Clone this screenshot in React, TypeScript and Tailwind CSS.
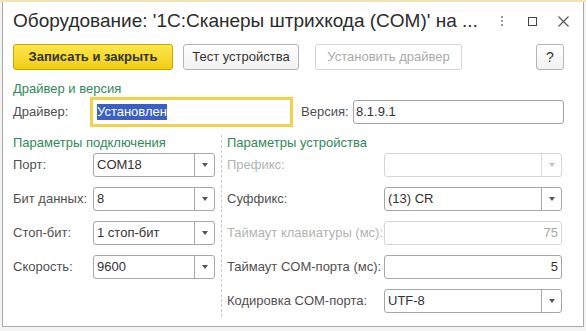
import type { ReactNode } from "react";

type RowProps = { label: string; disabled?: boolean; labelWidth: string; children: ReactNode };

function Row({ label, disabled, labelWidth, children }: RowProps) {
  return (
    <div className="flex h-[24px] items-center">
      <span className={`${labelWidth} shrink-0 ${disabled ? "text-[#b3b3b3]" : "text-[#505050]"}`}>{label}</span>
      {children}
    </div>
  );
}

function Arrow({ disabled }: { disabled?: boolean }) {
  return (
    <span
      className={`h-0 w-0 border-l-[3px] border-r-[3px] border-t-[4px] border-l-transparent border-r-transparent ${
        disabled ? "border-t-[#c4c4c4]" : "border-t-[#555]"
      }`}
    />
  );
}

function Select({ value, width, disabled }: { value?: string; width: string; disabled?: boolean }) {
  return (
    <div
      className={`${width} flex h-[24px] rounded-[3px] border bg-white ${
        disabled ? "border-[#d6d6d6]" : "border-[#a6a6a6]"
      }`}
    >
      <span className="flex flex-1 items-center pl-[3px] text-[#333]">{value}</span>
      <span
        className={`flex w-[20px] items-center justify-center border-l ${
          disabled ? "border-[#dcdcdc]" : "border-[#a6a6a6]"
        }`}
      >
        <Arrow disabled={disabled} />
      </span>
    </div>
  );
}

function NumField({ value, disabled }: { value: string; disabled?: boolean }) {
  return (
    <div
      className={`flex h-[24px] w-[178px] items-center justify-end rounded-[3px] border bg-white pr-[3px] ${
        disabled ? "border-[#d6d6d6] text-[#a8a8a8]" : "border-[#a6a6a6] text-[#333]"
      }`}
    >
      {value}
    </div>
  );
}

export default function App() {
  return (
    <div className="h-[331px] w-[586px] overflow-hidden bg-[#f3f3f3] font-[family-name:'Liberation_Sans',Arial,sans-serif] text-[13px] text-[#444]">
      <div className="h-[2px] bg-[#efe4b9]" />
      <div className="ml-[2px] h-[325px] w-[582px] border-b border-l border-r border-[#a9a9a9] bg-white pl-[10px] pr-[19px]">
        {/* title */}
        <div className="flex h-[38px] items-center">
          <span className="flex-1 text-[19px] text-[#2b2b2b]">
            Оборудование: '1С:Сканеры штрихкода (COM)' на ...
          </span>
          <div className="mr-[-5px] flex items-center">
            <span className="flex flex-col gap-[2px]">
              <span className="h-[2px] w-[2px] bg-[#999]" />
              <span className="h-[2px] w-[2px] bg-[#999]" />
              <span className="h-[2px] w-[2px] bg-[#999]" />
            </span>
            <span className="ml-[25px] h-[9px] w-[9px] border border-[#444]" />
            <svg className="ml-[21px]" width="11" height="11" viewBox="0 0 11 11">
              <path d="M0.5 0.5L10.5 10.5M10.5 0.5L0.5 10.5" stroke="#555" strokeWidth="1.1" fill="none" />
            </svg>
          </div>
        </div>

        {/* toolbar */}
        <div className="mt-[4px] flex h-[26px] items-stretch">
          <button className="w-[160px] rounded-[3px] border border-[#c9a800] bg-gradient-to-b from-[#fde64a] to-[#f2cd08] font-bold text-[#333]">
            Записать и закрыть
          </button>
          <button className="ml-[10px] w-[116px] rounded-[3px] border border-[#b5b5b5] bg-gradient-to-b from-white to-[#f2f2f2] text-[#333]">
            Тест устройства
          </button>
          <button className="ml-[16px] w-[147px] rounded-[3px] border border-[#d5d5d5] bg-white text-[#aaa]">
            Установить драйвер
          </button>
          <button className="ml-auto w-[28px] rounded-[3px] border border-[#b5b5b5] bg-gradient-to-b from-white to-[#f2f2f2] text-[14px] text-[#333]">
            ?
          </button>
        </div>

        {/* driver */}
        <div className="mt-[11px] h-[16px] leading-[16px] text-[#2f8a58]">Драйвер и версия</div>
        <div className="flex h-[30px] items-center">
          <span className="w-[77px] shrink-0 text-[#505050]">Драйвер:</span>
          <div className="flex h-[30px] w-[203px] items-center border-[3px] border-[#f1d24a] bg-white pl-[4px]">
            <span className="bg-[#3a5fc6] leading-[16px] text-white">Установлен</span>
          </div>
          <span className="ml-[8px] w-[52px] shrink-0 text-[#505050]">Версия:</span>
          <div className="flex h-[24px] flex-1 items-center rounded-[3px] border border-[#a6a6a6] pl-[2px] text-[#333]">
            8.1.9.1
          </div>
        </div>

        {/* parameters */}
        <div className="mt-[8px] flex">
          <div className="flex w-[202px] flex-col gap-[10px]">
            <div className="mb-[-8px] h-[16px] leading-[16px] text-[#2f8a58]">Параметры подключения</div>
            <Row label="Порт:" labelWidth="w-[80px]">
              <Select value="COM18" width="w-[122px]" />
            </Row>
            <Row label="Бит данных:" labelWidth="w-[80px]">
              <Select value="8" width="w-[122px]" />
            </Row>
            <Row label="Стоп-бит:" labelWidth="w-[80px]">
              <Select value="1 стоп-бит" width="w-[122px]" />
            </Row>
            <Row label="Скорость:" labelWidth="w-[80px]">
              <Select value="9600" width="w-[122px]" />
            </Row>
          </div>
          <div className="ml-[6px] flex flex-1 flex-col gap-[10px] border-l border-dashed border-[#c9c9c9] pb-[4px] pl-[5px]">
            <div className="mb-[-8px] h-[16px] leading-[16px] text-[#2f8a58]">Параметры устройства</div>
            <Row label="Префикс:" labelWidth="w-[157px]" disabled>
              <Select width="w-[178px]" disabled />
            </Row>
            <Row label="Суффикс:" labelWidth="w-[157px]">
              <Select value="(13) CR" width="w-[178px]" />
            </Row>
            <Row label="Таймаут клавиатуры (мс):" labelWidth="w-[157px]" disabled>
              <NumField value="75" disabled />
            </Row>
            <Row label="Таймаут COM-порта (мс):" labelWidth="w-[157px]">
              <NumField value="5" />
            </Row>
            <Row label="Кодировка COM-порта:" labelWidth="w-[157px]">
              <Select value="UTF-8" width="w-[178px]" />
            </Row>
          </div>
        </div>
      </div>
    </div>
  );
}
